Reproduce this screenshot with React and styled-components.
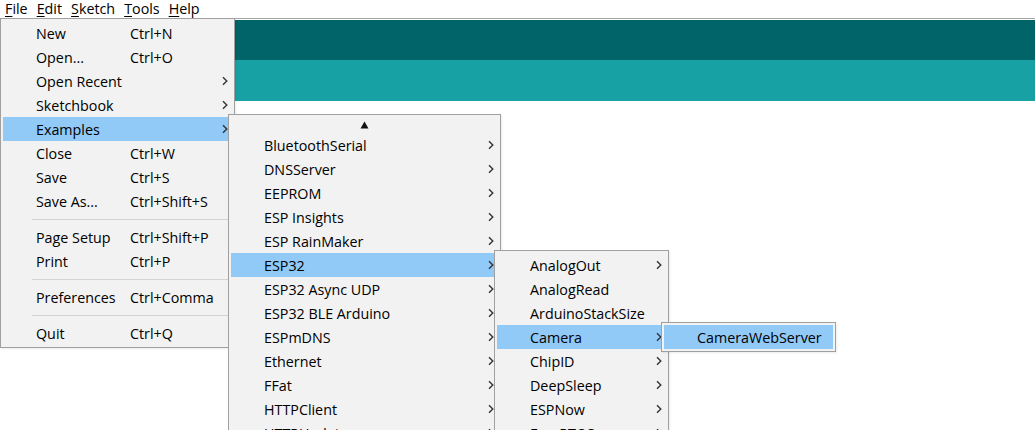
import React from "react";
import styled, { createGlobalStyle } from "styled-components";

const Global = createGlobalStyle`
  html, body { margin: 0; padding: 0; background: #ffffff; }
  body {
    font-family: "Open Sans", "Noto Sans", "DejaVu Sans", sans-serif;
    font-size: 14.3px;
    color: #000;
  }
`;

const Window = styled.div`
  position: relative;
  width: 1035px;
  height: 430px;
  overflow: hidden;
  background: #ffffff;
`;

const MenuBar = styled.div`
  display: flex;
  align-items: center;
  height: 18px;
  padding-left: 1px;
  border-bottom: 1px solid #a6a6a6;
  background: #ffffff;
`;

const BarItem = styled.span`
  padding: 0 4px;
  margin-right: 1px;
  line-height: 18px;
  u { text-decoration-thickness: 1px; text-underline-offset: 2px; }
`;

const Gap = styled.div`
  height: 1px;
`;

const Band = styled.div`
  height: ${(p) => p.$h}px;
  background: ${(p) => p.$c};
`;

const Menu = styled.div`
  position: absolute;
  left: ${(p) => p.$left || "0"};
  top: ${(p) => p.$top || "0"};
  width: ${(p) => p.$w}px;
  box-sizing: border-box;
  border: 1px solid #a0a0a0;
  background: #f2f2f2;
  padding: 2px;
  z-index: ${(p) => p.$z || 10};
  box-shadow: 1px 1px 2px rgba(0, 0, 0, 0.08);
`;

const Sub = styled(Menu)`
  left: calc(100% - ${(p) => p.$inset || 4}px);
  top: -3px;
`;

const Row = styled.div`
  position: relative;
  display: flex;
  align-items: center;
  height: 24px;
  padding-left: 33px;
  padding-right: 4px;
  background: ${(p) => (p.$active ? "#91c9f7" : "transparent")};
  white-space: nowrap;
`;

const Label = styled.span`
  width: ${(p) => (p.$w ? `${p.$w}px` : "auto")};
  flex: ${(p) => (p.$w ? "none" : "1")};
`;

const Shortcut = styled.span`
  flex: 1;
`;

const Arrow = styled.svg`
  flex: none;
  width: 6px;
  height: 10px;
  margin-left: auto;
`;

const Separator = styled.div`
  height: 12px;
  display: flex;
  align-items: center;
  padding-left: 29px;
  &::after {
    content: "";
    flex: 1;
    height: 1px;
    background: #d4d4d4;
  }
`;

const ScrollUp = styled.div`
  height: 16px;
  display: flex;
  align-items: center;
  justify-content: center;
`;

const Chevron = () => (
  <Arrow viewBox="0 0 6 10">
    <path d="M1 1.2 L4.8 5 L1 8.8" fill="none" stroke="#333" strokeWidth="1.4" />
  </Arrow>
);

const Item = ({ label, shortcut, sub, active, children }) => (
  <Row $active={active}>
    <Label $w={shortcut !== undefined ? 94 : undefined}>{label}</Label>
    {shortcut !== undefined && <Shortcut>{shortcut}</Shortcut>}
    {sub && <Chevron />}
    {children}
  </Row>
);

const examples = [
  "BluetoothSerial",
  "DNSServer",
  "EEPROM",
  "ESP Insights",
  "ESP RainMaker",
  "ESP32",
  "ESP32 Async UDP",
  "ESP32 BLE Arduino",
  "ESPmDNS",
  "Ethernet",
  "FFat",
  "HTTPClient",
  "HTTPUpdate",
  "HTTPUpdateServer",
];

const esp32 = [
  "AnalogOut",
  "AnalogRead",
  "ArduinoStackSize",
  "Camera",
  "ChipID",
  "DeepSleep",
  "ESPNow",
  "FreeRTOS",
  "GPIO",
];

const noArrow = new Set(["AnalogRead", "ArduinoStackSize"]);

export default function App() {
  return (
    <>
      <Global />
      <Window>
        <MenuBar>
          <BarItem><u>F</u>ile</BarItem>
          <BarItem><u>E</u>dit</BarItem>
          <BarItem><u>S</u>ketch</BarItem>
          <BarItem><u>T</u>ools</BarItem>
          <BarItem><u>H</u>elp</BarItem>
        </MenuBar>
        <Gap />
        <Band $h={40} $c="#006468" />
        <Band $h={41} $c="#17a1a5" />

        <Menu $left="0px" $top="18px" $w={235}>
          <Item label="New" shortcut="Ctrl+N" />
          <Item label="Open..." shortcut="Ctrl+O" />
          <Item label="Open Recent" sub />
          <Item label="Sketchbook" sub />
          <Item label="Examples" sub active>
            <Sub $w={273} $inset={4} $z={11}>
              <ScrollUp>
                <svg width="9" height="8" viewBox="0 0 9 8">
                  <polygon points="4.5,0.5 8.5,7.5 0.5,7.5" fill="#111" />
                </svg>
              </ScrollUp>
              {examples.map((e) => (
                <Item key={e} label={e} sub active={e === "ESP32"}>
                  {e === "ESP32" && (
                    <Sub $w={175} $inset={4} $z={12}>
                      {esp32.map((x) => (
                        <Item key={x} label={x} sub={!noArrow.has(x)} active={x === "Camera"}>
                          {x === "Camera" && (
                            <Sub $w={175} $inset={5} $z={13}>
                              <Item label="CameraWebServer" active />
                            </Sub>
                          )}
                        </Item>
                      ))}
                    </Sub>
                  )}
                </Item>
              ))}
            </Sub>
          </Item>
          <Item label="Close" shortcut="Ctrl+W" />
          <Item label="Save" shortcut="Ctrl+S" />
          <Item label="Save As..." shortcut="Ctrl+Shift+S" />
          <Separator />
          <Item label="Page Setup" shortcut="Ctrl+Shift+P" />
          <Item label="Print" shortcut="Ctrl+P" />
          <Separator />
          <Item label="Preferences" shortcut="Ctrl+Comma" />
          <Separator />
          <Item label="Quit" shortcut="Ctrl+Q" />
        </Menu>
      </Window>
    </>
  );
}
